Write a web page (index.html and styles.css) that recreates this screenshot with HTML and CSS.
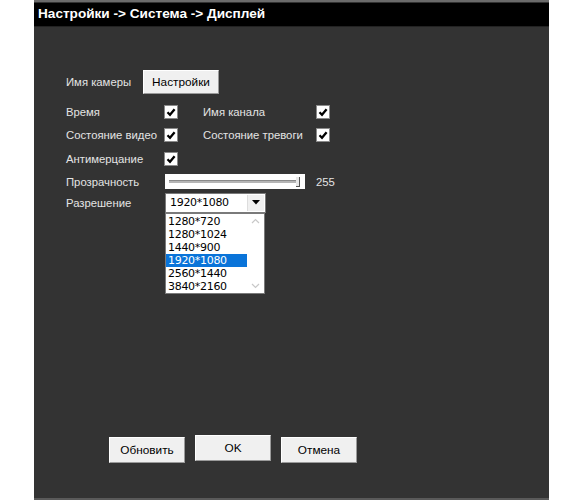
FILE: index.html
```html
<!DOCTYPE html>
<html lang="ru">
<head>
<meta charset="utf-8">
<link rel="stylesheet" href="styles.css">
</head>
<body>
<div class="panel">
  <div class="titlebar">Настройки -&gt; Система -&gt; Дисплей</div>
  <div class="content">
    <div class="row cam">
      <span class="label">Имя камеры</span>
      <button class="btn small">Настройки</button>
    </div>
    <div class="grid">
      <span class="label">Время</span>
      <span class="cb"><svg viewBox="0 0 12 12"><path d="M2.5 6.2 L5 8.7 L9.6 3.3" /></svg></span>
      <span class="label">Имя канала</span>
      <span class="cb"><svg viewBox="0 0 12 12"><path d="M2.5 6.2 L5 8.7 L9.6 3.3" /></svg></span>

      <span class="label">Состояние видео</span>
      <span class="cb"><svg viewBox="0 0 12 12"><path d="M2.5 6.2 L5 8.7 L9.6 3.3" /></svg></span>
      <span class="label">Состояние тревоги</span>
      <span class="cb"><svg viewBox="0 0 12 12"><path d="M2.5 6.2 L5 8.7 L9.6 3.3" /></svg></span>

      <span class="label">Антимерцание</span>
      <span class="cb"><svg viewBox="0 0 12 12"><path d="M2.5 6.2 L5 8.7 L9.6 3.3" /></svg></span>
      <span></span><span></span>
    </div>
    <div class="row slide">
      <span class="label">Прозрачность</span>
      <span class="slider"><span class="track"></span><span class="thumb"></span></span>
      <span class="val">255</span>
    </div>
    <div class="row res">
      <span class="label">Разрешение</span>
      <div class="selectwrap">
        <div class="select"><span class="selval">1920*1080</span><span class="arrow"><svg viewBox="0 0 8 5"><path d="M0 0 H8 L4 4.5 Z"/></svg></span></div>
        <div class="list">
          <div class="items">
            <div class="item">1280*720</div>
            <div class="item">1280*1024</div>
            <div class="item">1440*900</div>
            <div class="item sel">1920*1080</div>
            <div class="item">2560*1440</div>
            <div class="item">3840*2160</div>
          </div>
          <div class="scroll">
            <svg viewBox="0 0 9 6"><path d="M1 5 L4.5 1.5 L8 5"/></svg>
            <svg viewBox="0 0 9 6"><path d="M1 1 L4.5 4.5 L8 1"/></svg>
          </div>
        </div>
      </div>
    </div>
    <div class="buttons">
      <button class="btn big">Обновить</button>
      <button class="btn big ok">OK</button>
      <button class="btn big">Отмена</button>
    </div>
  </div>
</div>
</body>
</html>
```
FILE: styles.css
```css
html, body {
  margin: 0;
  padding: 0;
  background: #ffffff;
}
body {
  font-family: "Liberation Sans", Arial, sans-serif;
  font-size: 11.3px;
}
.panel {
  margin-left: 34px;
  width: 515px;
  height: 496px;
  border-top: 2px solid #6b6b6b;
  border-bottom: 2px solid #5a5a5a;
  background: #333333;
  display: flex;
  flex-direction: column;
}
.titlebar {
  margin-top: 1px;
  height: 23px;
  background: #000;
  border-bottom: 1px solid #222;
  color: #fff;
  font-weight: bold;
  font-size: 13.6px;
  line-height: 22px;
  padding-left: 4px;
}
.content {
  padding-left: 32px;
  color: #e6e6e6;
  flex: 1;
  display: flex;
  flex-direction: column;
}
.label {
  color: #e4e4e4;
  white-space: nowrap;
}
.row {
  display: flex;
  align-items: center;
}
.cam {
  margin-top: 43px;
  height: 24px;
}
.cam .label {
  width: 77px;
}
.btn {
  font-family: "Liberation Sans", Arial, sans-serif;
  background: #f0f0f0;
  border: 1px solid #fff;
  border-right-color: #9a9a9a;
  border-bottom-color: #9a9a9a;
  color: #000;
  padding: 0;
  margin: 0;
}
.btn.small {
  width: 76px;
  height: 24px;
  font-size: 11.8px;
}
.grid {
  margin-top: 6px;
  display: grid;
  grid-template-columns: 99px 38px 114px 14px;
  grid-auto-rows: 23.5px;
  align-items: center;
}
.cb {
  width: 12px;
  height: 12px;
  background: #fff;
  border: 1px solid #8a8a8a;
  box-sizing: content-box;
  display: block;
  margin-left: -1px;
}
.cb svg {
  width: 12px;
  height: 12px;
  display: block;
}
.cb path {
  fill: none;
  stroke: #000;
  stroke-width: 2.3;
}
.slide {
  height: 24px;
  margin-top: -1px;
}
.slide .label {
  width: 99px;
}
.slider {
  position: relative;
  width: 140px;
  height: 15px;
  background: #fff;
  display: block;
}
.track {
  position: absolute;
  left: 4px;
  right: 5px;
  top: 6px;
  height: 2px;
  background: #b5b5b5;
  border-bottom: 1px solid #fff;
  border-top: 1px solid #8a8a8a;
}
.thumb {
  position: absolute;
  right: 5px;
  top: 3px;
  width: 3px;
  height: 9px;
  background: #e8e8e8;
  border-right: 1px solid #555;
  border-bottom: 1px solid #555;
}
.val {
  margin-left: 11px;
  color: #e4e4e4;
}
.res {
  align-items: flex-start;
  margin-top: -1px;
}
.res .label {
  width: 99px;
  line-height: 20px;
}
.selectwrap {
  width: 101px;
}
.select {
  height: 18px;
  background: #fff;
  border: 1px solid #7a7a7a;
  display: flex;
  align-items: center;
  color: #000;
  font-size: 11px;
  font-family: "DejaVu Sans", sans-serif;
}
.selval {
  flex: 1;
  padding-left: 4px;
  letter-spacing: -0.3px;
}
.arrow {
  width: 16px;
  height: 16px;
  margin-right: 1px;
  background: #f0f0f0;
  border-left: 1px solid #ddd;
  display: flex;
  align-items: center;
  justify-content: center;
}
.arrow svg {
  width: 8px;
  height: 5px;
}
.arrow path {
  fill: #000;
}
.list {
  width: 98px;
  background: #fff;
  border: 1px solid #7a7a7a;
  display: flex;
  color: #000;
  font-family: "DejaVu Sans", sans-serif;
  font-size: 11px;
}
.items {
  flex: 1;
  padding-top: 1px;
}
.item {
  height: 13px;
  line-height: 13px;
  padding-left: 2px;
  letter-spacing: -0.3px;
}
.item.sel {
  background: #0a74d9;
  color: #fff;
}
.scroll {
  width: 17px;
  display: flex;
  flex-direction: column;
  justify-content: space-between;
  align-items: center;
  padding: 4px 0;
}
.scroll svg {
  width: 9px;
  height: 6px;
}
.scroll path {
  fill: none;
  stroke: #c8c8c8;
  stroke-width: 1.2;
}
.buttons {
  margin-top: 141px;
  padding-left: 43px;
  display: flex;
  align-items: flex-start;
  gap: 10px;
}
.btn.big {
  width: 76px;
  height: 26px;
  font-size: 11.8px;
  margin-top: 2px;
}
.btn.big.ok {
  margin-top: 0;
}
```
